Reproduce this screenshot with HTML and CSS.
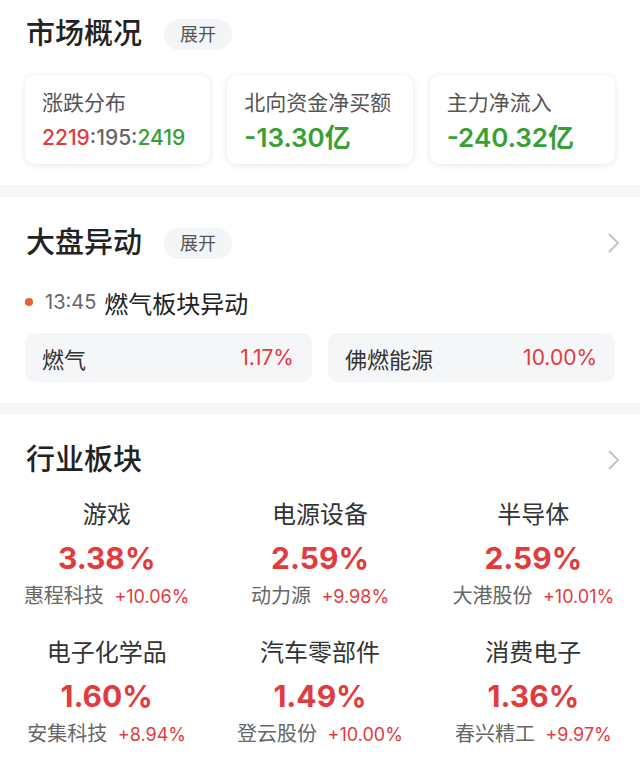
FILE: index.html
```html
<!DOCTYPE html>
<html lang="zh-CN">

<head>
   <meta charset="UTF-8">
   <meta name="viewport" content="width=device-width, initial-scale=1.0">
   <title>市场概况</title>

   <link rel="stylesheet" href="styles.css">
</head>

<body>
   <!-- 市场概况 -->
   <section class="panel panel-first">
      <div class="panel-head">
         <h2 class="panel-title">市场概况</h2>
         <span class="pill">展开</span>
      </div>

      <div class="cards">
         <div class="card">
            <div class="card-label">涨跌分布</div>
            <div class="card-value small">
               <span class="up">2219</span><span class="flat">:195:</span><span class="down">2419</span>
            </div>
         </div>
         <div class="card">
            <div class="card-label">北向资金净买额</div>
            <div class="card-value down">-13.30亿</div>
         </div>
         <div class="card">
            <div class="card-label">主力净流入</div>
            <div class="card-value down">-240.32亿</div>
         </div>
      </div>
   </section>

   <!-- 大盘异动 -->
   <section class="panel">
      <div class="panel-head">
         <h2 class="panel-title">大盘异动</h2>
         <span class="pill">展开</span>
         <svg class="chevron" width="12" height="20" viewBox="0 0 12 20">
            <polyline points="1.5,1.5 10,10 1.5,18.5" fill="none" stroke="#c4c4c4" stroke-width="2" stroke-linecap="round" stroke-linejoin="round" />
         </svg>
      </div>

      <div class="event">
         <span class="dot"></span>
         <span class="event-time">13:45</span>
         <span class="event-text">燃气板块异动</span>
      </div>

      <div class="event-rows">
         <div class="event-row">
            <span class="row-name">燃气</span>
            <span class="row-pct up">1.17%</span>
         </div>
         <div class="event-row">
            <span class="row-name">佛燃能源</span>
            <span class="row-pct up">10.00%</span>
         </div>
      </div>
   </section>

   <!-- 行业板块 -->
   <section class="panel panel-last">
      <div class="panel-head">
         <h2 class="panel-title">行业板块</h2>
         <svg class="chevron" width="12" height="20" viewBox="0 0 12 20">
            <polyline points="1.5,1.5 10,10 1.5,18.5" fill="none" stroke="#c4c4c4" stroke-width="2" stroke-linecap="round" stroke-linejoin="round" />
         </svg>
      </div>

      <div class="sectors" id="sectors"></div>
   </section>

   <script>
      // sector data
      const sectors = [
         { name: "游戏", pct: "3.38%", stock: "惠程科技", stockPct: "+10.06%" },
         { name: "电源设备", pct: "2.59%", stock: "动力源", stockPct: "+9.98%" },
         { name: "半导体", pct: "2.59%", stock: "大港股份", stockPct: "+10.01%" },
         { name: "电子化学品", pct: "1.60%", stock: "安集科技", stockPct: "+8.94%" },
         { name: "汽车零部件", pct: "1.49%", stock: "登云股份", stockPct: "+10.00%" },
         { name: "消费电子", pct: "1.36%", stock: "春兴精工", stockPct: "+9.97%" }
      ];

      const grid = document.getElementById("sectors");
      sectors.forEach(s => {
         const item = document.createElement("div");
         item.className = "sector";
         item.innerHTML = `
            <div class="sector-name">${s.name}</div>
            <div class="sector-pct up">${s.pct}</div>
            <div class="sector-sub">
               <span class="sub-name">${s.stock}</span>
               <span class="sub-pct up">${s.stockPct}</span>
            </div>
         `;
         grid.appendChild(item);
      });
   </script>
</body>

</html>
```

FILE: styles.css
```css
/* General body styling */
body {
   font-family: "Inter", "Noto Sans CJK SC", sans-serif;
   background-color: #f5f6f8;
   margin: 0;
   width: 640px;
   color: #222;
}

.up {
   color: #e23b3d;
}

.down {
   color: #37a034;
}

.flat {
   color: #666;
}

/* Panels */
.panel {
   background-color: #ffffff;
   padding: 30px 25px 21px 25px;
   margin-bottom: 11px;
}

.panel-first {
   padding-top: 18px;
   margin-bottom: 12px;
}

.panel-last {
   margin-bottom: 0;
   padding-bottom: 30px;
}

.panel-head {
   display: flex;
   align-items: center;
   height: 32px;
}

.panel-title {
   margin: 0;
   font-size: 29px;
   font-weight: 500;
   color: #222;
   line-height: 32px;
   padding-left: 1px;
}

.pill {
   margin-left: 22px;
   height: 31px;
   line-height: 31px;
   padding: 0 16px;
   border-radius: 16px;
   background-color: #f4f5f7;
   color: #555;
   font-size: 18px;
}

.chevron {
   margin-left: auto;
   margin-right: -5px;
}

/* Market cards */
.cards {
   display: grid;
   grid-template-columns: repeat(3, 1fr);
   gap: 17px;
   margin-top: 25px;
}

.card {
   height: 89px;
   box-sizing: border-box;
   padding: 14px 17px 0 17px;
   border-radius: 10px;
   background-color: #ffffff;
   box-shadow: 0 1px 7px rgba(0, 0, 0, 0.1);
}

.card-label {
   font-size: 21px;
   line-height: 27px;
   color: #555;
   white-space: nowrap;
}

.card-value {
   margin-top: 6px;
   font-size: 26px;
   line-height: 32px;
   font-weight: 600;
   white-space: nowrap;
}

.card-value.small {
   font-size: 21px;
   font-weight: 500;
}

/* Abnormal movement */
.event {
   display: flex;
   align-items: center;
   height: 30px;
   margin-top: 28px;
}

.dot {
   width: 8px;
   height: 8px;
   border-radius: 50%;
   background-color: #e5632c;
   margin-right: 12px;
}

.event-time {
   font-size: 20px;
   color: #666;
   margin-right: 8px;
}

.event-text {
   font-size: 24px;
   color: #222;
}

.event-rows {
   display: flex;
   gap: 16px;
   margin-top: 16px;
}

.event-row {
   flex: 1;
   height: 49px;
   display: flex;
   align-items: center;
   justify-content: space-between;
   padding: 0 18px 0 17px;
   border-radius: 10px;
   background-color: #f5f6f8;
}

.row-name {
   font-size: 22px;
   color: #333;
}

.row-pct {
   font-size: 21px;
}

/* Sectors */
.sectors {
   display: grid;
   grid-template-columns: repeat(3, 1fr);
   row-gap: 28px;
   margin: 24px -25px 0 -25px;
}

.sector {
   text-align: center;
}

.sector-name {
   font-size: 24px;
   line-height: 30px;
   color: #333;
}

.sector-pct {
   margin-top: 10px;
   font-size: 30px;
   line-height: 36px;
   font-weight: 700;
}

.sector-sub {
   margin-top: 7px;
   line-height: 26px;
   white-space: nowrap;
}

.sub-name {
   font-size: 20px;
   color: #666;
   margin-right: 6px;
}

.sub-pct {
   font-size: 18px;
}
```
